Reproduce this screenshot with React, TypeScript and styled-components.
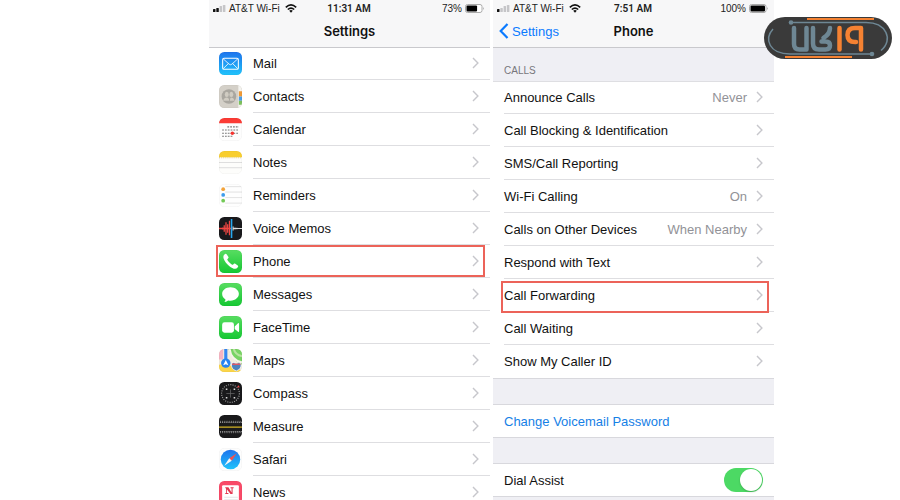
import React from 'react';
import styled, { createGlobalStyle, css } from 'styled-components';

const Global = createGlobalStyle`
  * { box-sizing: border-box; }
  body { margin: 0; background: #fff; font-family: "Liberation Sans", Arial, sans-serif; font-size: 13px; color: #111; }
  button, a { font: inherit; color: inherit; text-decoration: none; }
`;

const Page = styled.main`
  position: relative;
  display: grid;
  grid-template-columns: 209fr 281fr 3fr 281fr 126fr;
  height: 100vh;
  overflow: hidden;
`;

const Screen = styled.section<{ $column: number }>`
  grid-column: ${p => p.$column};
  min-width: 0;
  overflow: hidden;
  background: #fff;
`;

const Header = styled.header`
  height: 48px;
  background: #f7f7f8;
  border-bottom: 1px solid #c9c9cd;
`;

const StatusBar = styled.div`
  display: grid;
  grid-template-columns: 1fr auto 1fr;
  align-items: center;
  height: 16px;
  padding: 0 5px 0 4px;
  font-size: 10px;
  color: #222;
`;

const StatusSide = styled.span<{ $end?: boolean }>`
  display: flex;
  align-items: center;
  justify-content: ${p => (p.$end ? 'flex-end' : 'flex-start')};
  gap: 3px;
  white-space: nowrap;
`;

const Carrier = styled.span`
  margin-right: 2px;
`;

const Clock = styled.span`
  font-family: Roboto, sans-serif;
  font-weight: 600;
`;

const NavBar = styled.div`
  display: grid;
  grid-template-columns: 1fr auto 1fr;
  align-items: center;
  height: 30px;
  padding: 0 6px;
`;

const Title = styled.h1`
  grid-column: 2;
  margin: 0;
  font-family: Inter, sans-serif;
  font-size: 13px;
  font-weight: 600;
`;

const BackLink = styled.a`
  display: flex;
  align-items: center;
  gap: 3px;
  && { color: #0a7aff; }
`;

const List = styled.ul`
  list-style: none;
  margin: 0;
  padding: 0;
`;

const AppList = styled(List)`
  margin-top: -1px;
`;

const Item = styled.li`
  height: 33px;
  position: relative;
`;

const rowLayout = css`
  display: flex;
  align-items: center;
  width: 100%;
  height: 33px;
  padding: 0;
  border: 0;
  background: none;
  text-align: left;
`;

const Row = styled.button<{ $inset: number }>`
  ${rowLayout}
  padding-left: ${p => p.$inset}px;
`;

const RowBody = styled.span<{ $line?: boolean }>`
  display: flex;
  align-items: center;
  flex: 1;
  height: 33px;
  padding-right: 11px;
  border-bottom: 1px solid ${p => (p.$line ? '#dedee1' : 'transparent')};
`;

const Label = styled.span`
  flex: 1;
  white-space: nowrap;
`;

const Value = styled.span`
  margin-right: 9px;
  color: #929297;
`;

const IconSlot = styled.span`
  display: flex;
  width: 34px;
`;

const Highlight = styled.span<{ $left: number; $top: number; $bottom: number }>`
  position: absolute;
  inset: ${p => p.$top}px 5px ${p => p.$bottom}px ${p => p.$left}px;
  border: 2px solid #ec6359;
  pointer-events: none;
`;

const SectionTitle = styled.h2`
  display: flex;
  align-items: flex-end;
  height: 34px;
  margin: 0;
  padding: 0 11px 5px;
  background: #efeff4;
  border-bottom: 1px solid #dedee2;
  color: #77777c;
  font-size: 10px;
  font-weight: 400;
`;

const CallList = styled(List)`
  margin-top: -1px;
`;

const Spacer = styled.div`
  height: 27px;
  background: #efeff4;
  border: solid #d8d8dd;
  border-width: 1px 0;
`;

const ActionButton = styled.button`
  ${rowLayout}
  && { color: #1580e6; }
  height: 32px;
  padding-left: 11px;
`;

const ToggleRow = styled.label`
  ${rowLayout}
  height: 32px;
  padding: 0 11px;
`;

const Toggle = styled.input`
  appearance: none;
  width: 39px;
  height: 24px;
  margin: 0;
  border-radius: 12px;
  background: #d5d5d9;
  &:checked { background: #4cd964; }
  &::before {
    content: '';
    display: block;
    width: 22px;
    height: 22px;
    margin: 1px;
    border-radius: 50%;
    background: #fff;
    box-shadow: 0 1px 2px #0003;
  }
  &:checked::before { margin-left: 16px; }
`;

const Badge = styled.a`
  position: absolute;
  top: 17px;
  right: 8px;
  display: flex;
`;

const Defs = styled.svg`
  position: absolute;
`;

function Chevron() {
  return (
    <svg width="7" height="12" viewBox="0 0 7 12" fill="none" stroke="#c7c7cc" strokeWidth="1.4" aria-hidden="true">
      <path d="M1 1 5.900 6 1 11" />
    </svg>
  );
}

function Signal({ bars }: { bars: number }) {
  return (
    <svg width="13" height="8" viewBox="0 0 13 8" aria-hidden="true">
      {[3, 4, 6, 7].map((h, i) => (
        <rect key={h} x={i * 3.3} y={8 - h} width="2.5" height={h} rx=".6" fill={i < bars ? '#111' : '#c5c5c8'} />
      ))}
    </svg>
  );
}

function Wifi() {
  return (
    <svg width="12" height="9" viewBox="0 0 12 9" fill="none" stroke="#111" strokeWidth="1.6" aria-hidden="true">
      <path d="M.8 3.4Q6-1.5 11.2 3.4M2.8 5.5Q6 2.6 9.2 5.5" />
      <path d="M4.2 6.8Q6 5.4 7.8 6.8L6 8.7Z" fill="#111" stroke="none" />
    </svg>
  );
}

function Battery({ level }: { level: number }) {
  return (
    <svg width="20" height="9" viewBox="0 0 20 9" aria-hidden="true">
      <rect x=".5" y=".5" width="16.5" height="8" rx="2" fill="#fff" stroke="#aaa" />
      <rect x="1.5" y="1.5" width={14.5 * level} height="6" rx="1" fill="#000" />
      <path d="M18 3v3q1.5-1.5 0-3" fill="#999" />
    </svg>
  );
}

type IconName = 'mail' | 'contacts' | 'calendar' | 'notes' | 'reminders' | 'voice' | 'phone' | 'messages'
  | 'facetime' | 'maps' | 'compass' | 'measure' | 'safari' | 'news';

const art: Record<IconName, React.ReactNode> = {
  mail: (
    <>
      <rect width="22" height="22" fill="url(#blue)" />
      <g fill="none" stroke="#fff"><rect x="3.5" y="6" width="15" height="10.5" rx="1.3" /><path d="m4 6.5 5.7 5.2q1.3 1 2.6 0L18 6.5M4 16l5-5m9 5-5-5" strokeWidth=".8" /></g>
    </>
  ),
  contacts: (
    <>
      <rect width="22" height="22" fill="#d4d0c8" />
      <path fill="#f4f3ef" d="M18.5 0H22v22h-3.5z" />
      <path fill="#f09a37" d="M19 6h3v5h-3z" /><path fill="#4c9ee8" d="M19 11h3v4h-3z" /><path fill="#7cc05b" d="M19 15h3v4h-3z" />
      <circle cx="9.5" cy="11" r="7" fill="#aaa7a0" />
      <g fill="#d0ccc2"><ellipse cx="7.4" cy="9" rx="1.9" ry="2.5" /><ellipse cx="11.8" cy="9" rx="1.9" ry="2.5" /><path d="M4 15q1-3 3.4-3 2 0 2.4 3zm6.5 0q0-3 1.4-3 2 0 3 3z" /></g>
    </>
  ),
  calendar: (
    <>
      <rect width="22" height="22" fill="#fdfdfd" /><path fill="#fb3b35" d="M0 0h22v5H0z" />
      <path d="M8 8.5h11M3 11.5h16M3 14.5h16M3 17.5h10" stroke="#777" strokeDasharray="1.7 1" /><circle cx="12.8" cy="14.5" r="1.7" fill="#f6342f" />
    </>
  ),
  notes: (
    <>
      <rect width="22" height="22" fill="#fdfdfb" /><path fill="#f8ce2d" d="M0 0h22v6H0z" />
      <path d="M0 6.5h22" stroke="#d6b750" strokeDasharray="1 1" strokeWidth=".6" /><path d="M0 11h22M0 16h22" stroke="#d8d8d8" strokeWidth=".8" />
    </>
  ),
  reminders: (
    <>
      <rect width="22" height="22" fill="#fefefe" /><path d="M6 2.500h16M6 7.700h16M6 13h16M6 18.300h16" stroke="#ddd" strokeWidth=".8" />
      <circle cx="4" cy="5" r="1.8" fill="#f3a33a" /><circle cx="4" cy="10.5" r="1.8" fill="#3e9cec" /><circle cx="4" cy="16" r="1.8" fill="#73c957" />
    </>
  ),
  voice: (
    <>
      <rect width="22" height="22" fill="#19191c" />
      <path d="M0 11h12M3.500 10v2M5 8v6M6.700 5v12M8.300 7v8M10 3.500v14" stroke="#f04743" strokeWidth="1.200" /><path d="M12 2v18" stroke="#27a8ef" strokeWidth="1.500" />
      <path d="M13.500 9v4m1.800-3v2m1.800-1.800v1.600M14 11h8" stroke="#ddd" />
    </>
  ),
  phone: (
    <>
      <rect width="22" height="22" fill="url(#green)" />
      <path fill="#fff" d="M5.2 4.200c1-.9 1.700-.8 2.400.3l1.300 2c.5.8.3 1.200-.7 2-.5.5-.4.8 0 1.400 1 1.700 2.400 3 4 4 .7.4 1 .4 1.400-.1.8-1 1.200-1.100 2-.6l2 1.300c1 .7 1 1.400.2 2.300-1.700 2-4.700 1.200-8.100-1.600-2.400-2-4.500-4.600-5.200-6.800-.6-1.900-.4-3.200.7-4.200Z" />
    </>
  ),
  messages: (
    <>
      <rect width="22" height="22" fill="url(#green)" />
      <path fill="#fff" d="M11 4c4.500 0 8 2.800 8 6.400 0 3.700-3.500 6.500-8 6.500q-1.200 0-2.200-.2-1.600 1.500-3.600 1.400 1-1 1-2.300Q3 13.700 3 10.400C3 6.800 6.500 4 11 4Z" />
    </>
  ),
  facetime: (
    <>
      <rect width="22" height="22" fill="url(#green)" /><rect x="3" y="6" width="11.300" height="10" rx="2.300" fill="#fff" />
      <path d="m15 10 3.200-3q1-.6 1 .5v7.200q0 1-1 .4L15 12.400Z" fill="#fff" />
    </>
  ),
  maps: (
    <>
      <rect width="22" height="22" fill="#f1ecdf" /><path d="M9 0h13v15Q12 11 9 0Z" fill="#77d464" />
      <path d="M10-1q1 12 13 14" fill="none" stroke="#f6f3e8" strokeWidth="2" /><path d="M14-1q1 7 9 8" fill="none" stroke="#b8e4a0" strokeWidth="2" />
      <path d="M0 15q9-2 22 6v1H0z" fill="#fbd54a" /><path d="M0 0h4v10H0z" fill="#f6b4c2" />
      <path d="M6.500 0v10" stroke="#3587f2" strokeWidth="3" /><circle cx="6.500" cy="13.500" r="4.500" fill="#2684ef" /><path d="m6.500 10.500 2.500 5-2.500-1-2.500 1z" fill="#fff" />
      <path d="m12 14 2-1 2.500 1L19 13l2 1q1 5-4.500 7-5.500-2-4.500-7" fill="#4d83bd" stroke="#fff" strokeWidth=".7" /><path d="M12.500 14.500h8" stroke="#dc5966" strokeWidth="1.500" />
    </>
  ),
  compass: (
    <>
      <rect width="22" height="22" fill="#19191b" /><circle cx="11" cy="11" r="8.500" fill="none" stroke="#999" strokeWidth="1.100" strokeDasharray="1 1.200" />
      <path d="M11 7v8m-4-4h8" stroke="#666" strokeWidth=".7" /><path d="m17 5 2-2 .7 2.300" fill="#f54848" />
      <path d="M6.500 7h1.500m6 0h1.500m-9 8h1.500m6 0h1.500" stroke="#ddd" strokeWidth="1.500" />
    </>
  ),
  measure: (
    <>
      <rect width="22" height="22" fill="#19191b" /><path d="M0 11.500h22" stroke="#d3b326" strokeWidth="1.200" />
      <path d="M1 6.500h21M1 16.500h21" stroke="#777" strokeWidth="2" strokeDasharray=".8 1.300" /><path d="M1 7h21M1 16h21" stroke="#aaa" strokeDasharray="1 1" />
    </>
  ),
  safari: (
    <>
      <rect width="22" height="22" fill="#fdfdfd" /><circle cx="11" cy="11" r="9.300" fill="url(#blue)" />
      <path d="m17 5-7.200 4.800 2.400 2.400Z" fill="#ef5350" /><path d="m5 17 4.800-7.200 2.400 2.400Z" fill="#f6f6f6" />
    </>
  ),
  news: (
    <>
      <rect width="22" height="22" fill="#f94a68" /><rect x="3" y="4" width="16" height="18" rx="1" fill="#fff" />
      <path d="M6 6h3l3 5V7h-1V6h3v1h-1v5.500h-2L7.500 7.800v3.700H9v1H6v-1h.7V7H6Z" fill="#e33650" />
      <path d="M5 15.500h13M5 18h13" stroke="#e5e5e7" />
    </>
  ),
};

function AppIcon({ name }: { name: IconName }) {
  return (
    <svg width="23" height="23" viewBox="0 0 22 22" aria-hidden="true">
      <g clipPath="url(#tile)">{art[name]}</g>
      <rect x=".25" y=".25" width="21.5" height="21.5" rx="4.750" fill="none" stroke="#0001" strokeWidth=".5" />
    </svg>
  );
}

function Logo() {
  return (
    <svg width="128" height="42" viewBox="0 0 128 42" fill="none" aria-hidden="true">
      <rect width="128" height="42" rx="21" fill="#3a3a3a" />
      <g stroke="#6e8794" strokeWidth="1.500">
        <path d="M27 5.500h75c20 0 28 17 15 28" /><path d="M108 37H26C5 37 0 22 9 12" />
      </g>
      <circle cx="27" cy="5.500" r="2.300" fill="#6e8794" /><circle cx="108" cy="37" r="2.300" fill="#6e8794" />
      <path d="M43 2h67M21 40h67" stroke="#f58232" strokeWidth="2" />
      <g stroke="#6e8794" strokeWidth="4.500" strokeLinecap="round" strokeLinejoin="round">
        <path d="M30 11v16q0 5.500 5.500 5.500h7V11" />
        <path d="M49 11v15.500q0 6 6 6h6.500q4.500 0 4.500-4t-4.500-4h-4M66 11q0 6-6.500 10" />
      </g>
      <g stroke="#f58232" strokeWidth="4.500" strokeLinecap="round" strokeLinejoin="round">
        <path d="M75.500 11v21.500" /><path d="M97 32.500V11h-6q-7.500 0-7.500 7T91 25h1" />
      </g>
    </svg>
  );
}

function Definitions() {
  return (
    <Defs width="0" height="0" aria-hidden="true">
      <defs>
        <linearGradient id="blue" x2="0" y2="1"><stop stopColor="#1e74ed" /><stop offset="1" stopColor="#20c3fb" /></linearGradient>
        <linearGradient id="green" x2="0" y2="1"><stop stopColor="#58dd61" /><stop offset="1" stopColor="#15c833" /></linearGradient>
        <clipPath id="tile"><rect width="22" height="22" rx="5" /></clipPath>
      </defs>
    </Defs>
  );
}

const apps: { icon: IconName; label: string }[] = [
  { icon: 'mail', label: 'Mail' }, { icon: 'contacts', label: 'Contacts' }, { icon: 'calendar', label: 'Calendar' },
  { icon: 'notes', label: 'Notes' }, { icon: 'reminders', label: 'Reminders' }, { icon: 'voice', label: 'Voice Memos' },
  { icon: 'phone', label: 'Phone' }, { icon: 'messages', label: 'Messages' }, { icon: 'facetime', label: 'FaceTime' },
  { icon: 'maps', label: 'Maps' }, { icon: 'compass', label: 'Compass' }, { icon: 'measure', label: 'Measure' },
  { icon: 'safari', label: 'Safari' }, { icon: 'news', label: 'News' },
];

const calls: { label: string; value?: string }[] = [
  { label: 'Announce Calls', value: 'Never' }, { label: 'Call Blocking & Identification' }, { label: 'SMS/Call Reporting' },
  { label: 'Wi-Fi Calling', value: 'On' }, { label: 'Calls on Other Devices', value: 'When Nearby' },
  { label: 'Respond with Text' }, { label: 'Call Forwarding' }, { label: 'Call Waiting' }, { label: 'Show My Caller ID' },
];

function Status({ bars, time, charge }: { bars: number; time: string; charge: number }) {
  return (
    <StatusBar>
      <StatusSide><Signal bars={bars} /><Carrier>AT&amp;T Wi-Fi</Carrier><Wifi /></StatusSide>
      <Clock>{time}</Clock>
      <StatusSide $end>{charge}% <Battery level={charge / 100} /></StatusSide>
    </StatusBar>
  );
}

export default function App() {
  return (
    <Page>
      <Global />
      <Definitions />
      <Screen $column={2}>
        <Header>
          <Status bars={2} time="11:31 AM" charge={73} />
          <NavBar><Title>Settings</Title></NavBar>
        </Header>
        <AppList>
          {apps.map(({ icon, label }) => (
            <Item key={label}>
              <Row $inset={10}>
                <IconSlot><AppIcon name={icon} /></IconSlot>
                <RowBody $line><Label>{label}</Label><Chevron /></RowBody>
              </Row>
              {label === 'Phone' && <Highlight $left={7} $top={0} $bottom={1} />}
            </Item>
          ))}
        </AppList>
      </Screen>
      <Screen $column={4}>
        <Header>
          <Status bars={1} time="7:51 AM" charge={100} />
          <NavBar>
            <BackLink href="#settings">
              <svg width="10" height="16" viewBox="0 0 10 16" fill="none" stroke="currentColor" strokeWidth="2.200" aria-hidden="true"><path d="M8.500 1 1.700 8l6.800 7" /></svg>
              Settings
            </BackLink>
            <Title>Phone</Title>
          </NavBar>
        </Header>
        <SectionTitle>CALLS</SectionTitle>
        <CallList>
          {calls.map(({ label, value }, i) => (
            <Item key={label}>
              <Row $inset={11}>
                <RowBody $line={i < calls.length - 1}><Label>{label}</Label>{value && <Value>{value}</Value>}<Chevron /></RowBody>
              </Row>
              {label === 'Call Forwarding' && <Highlight $left={8} $top={2} $bottom={-1} />}
            </Item>
          ))}
        </CallList>
        <Spacer />
        <ActionButton>Change Voicemail Password</ActionButton>
        <Spacer />
        <ToggleRow><Label>Dial Assist</Label><Toggle type="checkbox" defaultChecked /></ToggleRow>
        <Spacer />
      </Screen>
      <Badge href="#home" aria-label="Home"><Logo /></Badge>
    </Page>
  );
}
